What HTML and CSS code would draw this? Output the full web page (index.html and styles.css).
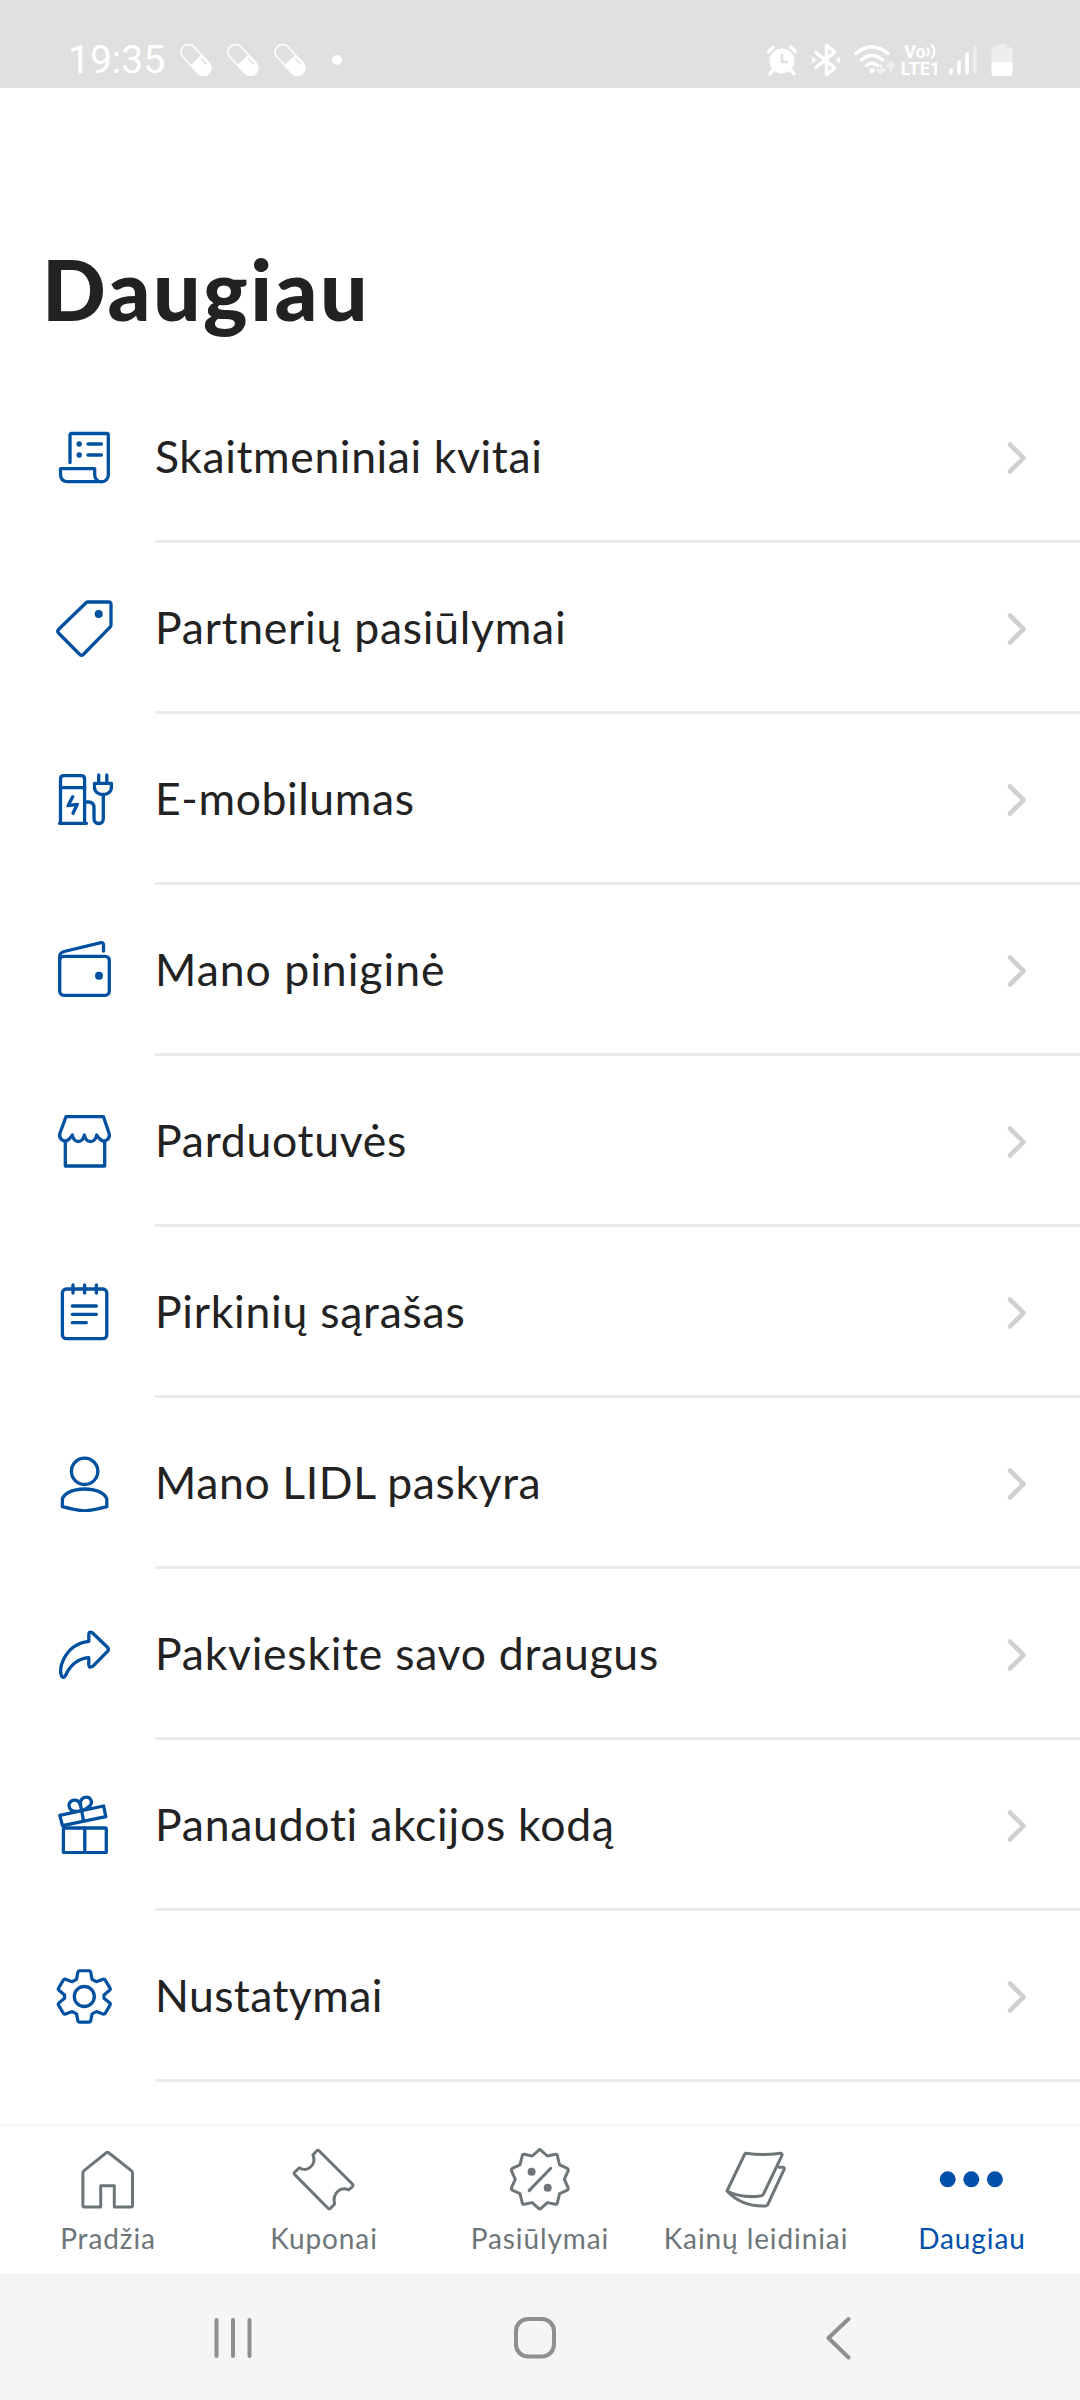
FILE: index.html
```html
<!DOCTYPE html>
<html lang="lt">
<head>
<meta charset="utf-8">
<title>Daugiau</title>
<link rel="stylesheet" href="styles.css">
</head>
<body>
<header class="status">
  <span class="time">19:35</span>
  <div class="notes">
    <svg class="pill" viewBox="0 0 32 32"><use href="#pill"/></svg>
    <svg class="pill" viewBox="0 0 32 32"><use href="#pill"/></svg>
    <svg class="pill" viewBox="0 0 32 32"><use href="#pill"/></svg>
  </div>
  <i class="more-dot"></i>
  <div class="system">
    <svg width="32" height="34" viewBox="0 0 32 34"><circle cx="16" cy="18" r="12.500" fill="#fff"/><path d="M2.500 8.500 7.500 4M29.500 8.500 24.500 4M7 27l-3 4M25 27l3 4" stroke="#fff" stroke-width="3.400" stroke-linecap="round"/><path d="M16 11v8h6" fill="none" stroke="#e0e0e0" stroke-width="2.600"/></svg>
    <svg class="bt" width="28" height="34" viewBox="0 0 28 34"><path d="M4 9.500 23 25l-8.500 6.500v-29L23 9 4 24.500" fill="none" stroke="#fff" stroke-width="3.400" stroke-linejoin="round" stroke-linecap="round"/><path d="M0 13.500 4.500 17 0 20.500zM28 13.500 23.500 17l4.500 3.500z" fill="#fff"/></svg>
    <svg class="wifi" width="42" height="34" viewBox="0 0 42 34"><path d="M2 10.500q15.500-13.500 32 0M7.500 17q10.500-9 21 0M12.500 22.500q5.500-4.500 11 0" fill="none" stroke="#fff" stroke-width="3.500" stroke-linecap="round"/><circle cx="18" cy="27.500" r="2.600" fill="#fff"/><path d="M27 21v9m-4-4 4 4 4-4M37 29v-9m-4 4 4-4 4 4" fill="none" stroke="#f1f1f1" stroke-width="2.600"/></svg>
    <div class="volte"><span>Vo<svg class="waves" width="11" height="17" viewBox="0 0 11 17"><path d="M1 4.500q3.500 4 0 8.500M5.500 1.500q6 7 0 14" fill="none" stroke="#fff" stroke-width="2.200"/></svg></span><span>LTE1</span></div>
    <svg class="signal" width="28" height="34" viewBox="0 0 28 34"><path d="M2 27v3M10 19v11M18 11v19" stroke="#fff" stroke-width="3.600" stroke-linecap="round"/><path d="M26 4v26" stroke="#ededed" stroke-width="3.600" stroke-linecap="round"/></svg>
    <svg class="battery" width="22" height="34" viewBox="0 0 22 34"><path d="M6.500 4V1h9v3H19q2.500 1 2.500 3v12H.5V7q0-2 2.500-3z" fill="#ededed"/><path d="M.5 19h21v11q0 3-3 3h-15q-3 0-3-3z" fill="#fff"/></svg>
  </div>
</header>
<main>
  <h1>Daugiau</h1>
  <ul class="menu">
    <li><svg class="icon" viewBox="0 0 60 60"><path d="M16 36.500V9q0-1.500 1.500-1.500h35.300q1.500 0 1.500 1.500v40a6.800 6.800 0 0 1-13.600 0v-6.300H6.500V48q0 7.700 7.500 7.700h33.500M34 18h13.400M34 29h13.400"/><circle class="solid" cx="25.200" cy="18" r="2.700"/><circle class="solid" cx="25.200" cy="29" r="2.700"/></svg><div class="cell"><span class="label">Skaitmeniniai kvitai</span><svg class="chevron" viewBox="0 0 20 34"><use href="#chevron"/></svg></div></li>
    <li><svg class="icon" viewBox="0 0 60 60"><path d="M34 5h20.500q2.500 0 2.500 2.500V28q0 1-.7 1.800L29.300 57.500q-1.800 1.500-3.500 0L4.500 36q-1.500-1.800 0-3.500L31.800 6q1-1 2.200-1z"/><circle class="solid" cx="44.700" cy="17" r="4"/></svg><div class="cell"><span class="label">Partnerių pasiūlymai</span><svg class="chevron" viewBox="0 0 20 34"><use href="#chevron"/></svg></div></li>
    <li><svg class="icon" viewBox="0 0 60 60"><path d="M6.500 55.300V11q0-3.300 3.300-3.300h17.500q3.300 0 3.300 3.300v44.300M5.500 55.300h27M6.500 19.700h24M18.700 28.700 14 37.700l9.300-1.400-4.300 9M31 34h3.500q5.500 0 5.500 6v10.300q0 5.200 4.700 5.200t4.600-5.200v-24M40.500 15.300h16.900v4q0 3.500-2.400 5.300-2 1.700-4 1.700h-4q-2 0-4-1.700-2.500-1.800-2.500-5.300zM44.700 7v8M52.800 7v8"/></svg><div class="cell"><span class="label">E-mobilumas</span><svg class="chevron" viewBox="0 0 20 34"><use href="#chevron"/></svg></div></li>
    <li><svg class="icon" viewBox="0 0 60 60"><rect x="5.700" y="17.300" width="49.600" height="39" rx="4"/><path d="M5.700 21v-3.500q0-3.800 4.500-5L47 3.700q2.500-.4 2.500 2V12"/><circle class="solid" cx="45" cy="36.700" r="4"/></svg><div class="cell"><span class="label">Mano piniginė</span><svg class="chevron" viewBox="0 0 20 34"><use href="#chevron"/></svg></div></li>
    <li><svg class="icon" viewBox="0 0 60 60"><path d="M11.300 31v25h39.400V31M12 6.700h37.500L55 23q1.300 3.500-1.500 6.500-5.500 4.500-10.800-4.500-1.500 6.500-6.200 6.500T30.300 25q-1.500 6.500-6 6.500t-6-6.500q-5.300 9-10.800 4.500Q4.700 26.500 6 23z"/></svg><div class="cell"><span class="label">Parduotuvės</span><svg class="chevron" viewBox="0 0 20 34"><use href="#chevron"/></svg></div></li>
    <li><svg class="icon" viewBox="0 0 60 60"><rect x="8.400" y="8" width="44.400" height="49.700" rx="4"/><path d="M19 4v8M30.600 4v8M42.400 4v8M18.300 25h24.100M18.300 33.300h24.100M18.300 41.700h14"/></svg><div class="cell"><span class="label">Pirkinių sąrašas</span><svg class="chevron" viewBox="0 0 20 34"><use href="#chevron"/></svg></div></li>
    <li><svg class="icon" viewBox="0 0 60 60"><circle cx="30.600" cy="19.300" r="13.200"/><path d="M8.400 54.700V48q0-4 6-7.500 7-3.500 16.200-3.500t16.200 3.500q6 3.500 6 7.500v6.700q-10 3-22.200 4.300-12.200-1.300-22.200-4.300z"/></svg><div class="cell"><span class="label">Mano LIDL paskyra</span><svg class="chevron" viewBox="0 0 20 34"><use href="#chevron"/></svg></div></li>
    <li><svg class="icon" viewBox="0 0 60 60"><path d="M34.800 18.300V11.500q.2-3.500 3.200-2l15.500 14.800q1.800 2 0 4L39 43.200q-3.700 2.300-4.200-1.200v-7.300Q19 36 11.500 52.500 9.500 56 7.500 53 5 46 9.500 36.500 17 20.500 34.800 18.300z"/></svg><div class="cell"><span class="label">Pakvieskite savo draugus</span><svg class="chevron" viewBox="0 0 20 34"><use href="#chevron"/></svg></div></li>
    <li><svg class="icon" viewBox="0 0 60 60"><rect x="9.400" y="34" width="42.900" height="24.700" rx="1"/><path d="M30.800 34v24.700M5.800 21.300 49.600 12l2.200 10.700L8.500 31.600zM27.700 16.700l1.800 10.200M27.700 16.700c-10 2.500-13.500-2-12.500-6.700 1.500-5 8-5 10-1.500 1.500 2.500 2 5 2.500 8.200 9-3 11-7.700 9-11.200-2.500-4-8.500-2.500-10 1.500-.6 3 0 6 1 9.700z"/></svg><div class="cell"><span class="label">Panaudoti akcijos kodą</span><svg class="chevron" viewBox="0 0 20 34"><use href="#chevron"/></svg></div></li>
    <li><svg class="icon" viewBox="0 0 60 60"><path transform="translate(.9 .9) scale(.97)" d="M25.500 5h9.600q1.500 0 1.800 1.500l1.400 7.300 4.400 2.500 7-2.500q1.500-.5 2.200.8l4.900 8.300q.8 1.300-.4 2.300L50.600 30v3.300l5.800 4.800q1.200 1 .4 2.300l-4.900 8.400q-.7 1.300-2.200.8l-7-2.500-4.400 2.300-1.400 7.100q-.3 1.500-1.800 1.500h-9.600q-1.500 0-1.800-1.500l-1.400-7.100-4.400-2.300-7 2.500q-1.500.5-2.200-.8l-4.900-8.400q-.8-1.300.4-2.300l5.800-4.800V30l-5.800-4.800q-1.200-1-.4-2.300l4.900-8.300q.7-1.300 2.200-.8l7 2.500 4.400-2.500 1.400-7.300Q24 5 25.500 5z"/><circle cx="30.300" cy="31.500" r="10"/></svg><div class="cell"><span class="label">Nustatymai</span><svg class="chevron" viewBox="0 0 20 34"><use href="#chevron"/></svg></div></li>
  </ul>
</main>
<nav class="tabs">
  <a class="tab"><svg viewBox="0 0 72 72"><path d="M28.700 65V43.700h13.600V65H59q1.500 0 1.500-1.500V31q0-1.500-1.500-2.700L37 11q-1.500-1.200-3 0L12.400 28.300q-1.500 1.200-1.500 2.700v32.500q0 1.500 1.500 1.500z"/></svg><span class="name">Pradžia</span></a>
  <a class="tab"><svg viewBox="0 0 72 72"><path d="M28.600 9q1.300-1.300 2.600 0l33.200 33q1.200 1.300 0 2.600L60.600 48q-6-3-11 1.500-5 5-3 12.500l-4 4.300q-1.300 1.300-2.600 0L6.800 32.600q-1.200-1.300 0-2.600l4.500-4.200q6.500 4 11.500-1 5.200-5.300 2.100-11.800z"/></svg><span class="name">Kuponai</span></a>
  <a class="tab"><svg viewBox="0 0 72 72"><path d="M34.600 8.300q1.200-1.500 2.400 0l6.400 5.700 8-1.700q2-.3 2 1.700l2.200 8.900 7.200 3.300q2 1 1.200 3L60.300 37.300 64 45.400q.8 2-1.200 3l-7.200 3.300-2.200 8.900q0 2-2 1.700l-8-1.700-6.400 5.700q-1.200 1.500-2.400 0l-6.400-5.700-8 1.700q-2 .3-2-1.700L16 51.700l-7.200-3.300q-2-1-1.200-3l3.700-8.100-3.700-8.100q-.8-2 1.200-3l7.200-3.300 2.200-8.900q0-2 2-1.700l8 1.700zM25.100 48.600 46.800 26.300"/><circle class="solid" cx="27.600" cy="29.700" r="4"/><circle class="solid" cx="43.700" cy="45.700" r="4"/></svg><span class="name">Pasiūlymai</span></a>
  <a class="tab"><svg viewBox="0 0 72 72"><path d="M25.900 11.300q17 2.500 34.500 0 2 0 1.600 2L43.500 52q-1 1.800-3 2-19 2.500-33.500-5L24.500 12.500q.5-1 1.400-1.200zM59.300 25.300h3.500q2 .2 1.300 2L47.800 62.500q-.6 1.500-2.300 1.500Q22 65 7 49"/></svg><span class="name">Kainų leidiniai</span></a>
  <a class="tab active"><svg viewBox="0 0 72 72"><circle class="solid" cx="11.700" cy="37.300" r="8"/><circle class="solid" cx="35.300" cy="37.300" r="8"/><circle class="solid" cx="58.900" cy="37.300" r="8"/></svg><span class="name">Daugiau</span></a>
</nav>
<footer class="system-nav">
  <svg viewBox="0 0 44 44"><path d="M5.500 4v36M22 4v36M38.500 4v36"/></svg>
  <svg viewBox="0 0 44 44"><rect x="2" y="3" width="38" height="37.500" rx="12"/></svg>
  <svg viewBox="0 0 44 44"><path d="M32.500 3 12.500 22l20 19.500"/></svg>
</footer>
<svg class="defs" width="0" height="0">
  <symbol id="pill" viewBox="0 0 32 32"><g transform="rotate(-43 16 16)"><rect x="8.500" y="-2.500" width="15" height="37" rx="7.500" fill="none" stroke="#fff" stroke-width="1.500"/><path d="M8 16h16v10.500a8 8 0 0 1-16 0z" fill="#fff"/><path d="M21 18.500v8" stroke="#e0e0e0" stroke-width="1.500"/></g></symbol>
  <symbol id="chevron" viewBox="0 0 20 34"><path d="m3 3.500 13.500 13.500L3 30.500" fill="none" stroke="#d0d0d0" stroke-width="4.600" stroke-linecap="round" stroke-linejoin="round"/></symbol>
</svg>
</body>
</html>
```
FILE: styles.css
```css
* { box-sizing: border-box; }
body {
  margin: 0;
  width: 1080px;
  height: 2400px;
  display: flex;
  flex-direction: column;
  background: #fff;
  color: #222;
  font-family: Lato, "Open Sans", sans-serif;
  overflow: hidden;
}
svg { display: block; flex: none; }
.defs { position: absolute; }

.status {
  height: 88px;
  flex: none;
  display: flex;
  align-items: flex-start;
  padding: 43px 67px 0 68px;
  background: #e0e0e0;
  color: #fff;
}
.time { width: 112px; font: 39px/34px Roboto, sans-serif; }
.notes { display: flex; gap: 15px; padding-top: 1px; }
.pill { width: 32px; height: 32px; }
.more-dot { width: 10px; height: 10px; border-radius: 50%; margin: 12px 0 0 26px; background: #fff; }
.system { display: flex; margin-left: auto; }
.bt { margin-left: 14px; }
.wifi { margin-left: 14px; }
.volte {
  width: 41px;
  margin-left: 4px;
  margin-right: 1px;
  display: flex;
  flex-direction: column;
  font: 700 18px/17px Roboto, sans-serif;
}
.volte span { display: flex; justify-content: center; }
.signal { margin-left: 7px; }
.battery { margin-left: 14px; }

main { flex: 1; }
h1 {
  margin: 0;
  height: 284px;
  padding: 150px 0 0 42px;
  font-size: 84px;
  line-height: 102px;
  font-weight: 900;
  letter-spacing: 2.5px;
}
.menu { margin: 0; padding: 0; list-style: none; }
.menu li { display: flex; height: 171px; padding-left: 54px; }
.icon {
  width: 60px;
  height: 60px;
  margin: 54px 41px 0 0;
  fill: none;
  stroke: #0050a0;
  stroke-width: 3.3;
  stroke-linecap: round;
  stroke-linejoin: round;
}
.icon .solid { fill: #0050a0; stroke: none; }
.cell {
  flex: 1;
  display: flex;
  align-items: center;
  justify-content: space-between;
  padding-right: 53px;
  border-bottom: 3px solid #ebebeb;
}
.label { font-size: 44.5px; line-height: 54px; white-space: nowrap; letter-spacing: .75px; }
.menu li:nth-child(1) .label,
.menu li:nth-child(3) .label,
.menu li:nth-child(7) .label { letter-spacing: .6px; }
.menu li:nth-child(4) .label { letter-spacing: 1px; }
.menu li:nth-child(10) .label { letter-spacing: .4px; }
.chevron { width: 20px; height: 34px; margin-top: 3px; }

.tabs {
  height: 150px;
  flex: none;
  display: grid;
  grid-template-columns: repeat(5, 216px);
  border-top: 3px solid #f8f8f8;
  background: #fff;
}
.tab {
  display: flex;
  flex-direction: column;
  align-items: center;
  padding-top: 15px;
  color: #6e7579;
}
.tab svg {
  width: 72px;
  height: 72px;
  fill: none;
  stroke: currentColor;
  stroke-width: 3;
  stroke-linecap: round;
  stroke-linejoin: round;
}
.tab .solid { fill: currentColor; stroke: none; }
.name { margin-top: 7px; font-size: 28px; line-height: 34px; white-space: nowrap; letter-spacing: .9px; }
.active { color: #0050aa; }

.system-nav {
  height: 126px;
  flex: none;
  display: flex;
  justify-content: space-between;
  padding: 42px 220px 0 211px;
  background: #f5f5f5;
}
.system-nav svg {
  width: 44px;
  height: 44px;
  fill: none;
  stroke: #8f8f8f;
  stroke-width: 4;
  stroke-linecap: round;
  stroke-linejoin: round;
}
```
